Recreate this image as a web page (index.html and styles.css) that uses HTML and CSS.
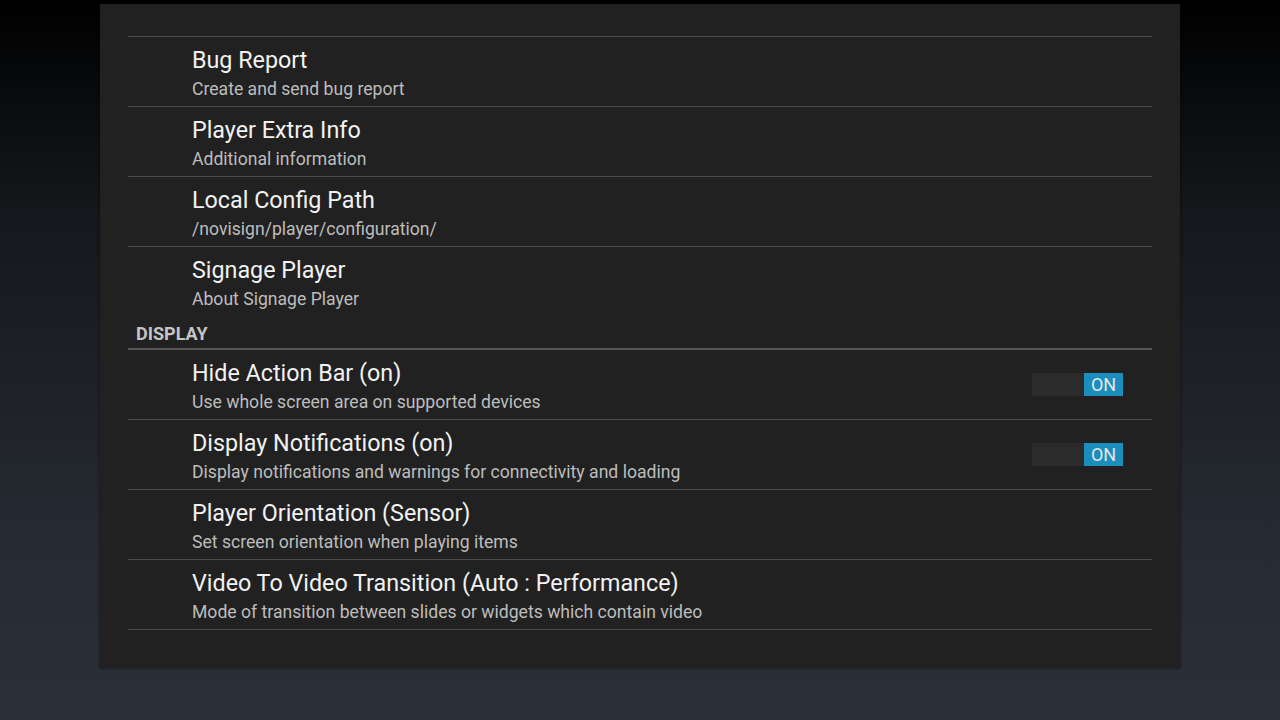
FILE: index.html
```html
<!DOCTYPE html>
<html lang="en">
<head>
  <meta charset="UTF-8" />
  <title>Settings</title>
  <link rel="stylesheet" href="styles.css">
</head>
<body>
  <div class="dialog">
    <div class="list">
      <div class="pref first">
        <div class="title">Bug Report</div>
        <div class="summary">Create and send bug report</div>
      </div>
      <div class="pref">
        <div class="title">Player Extra Info</div>
        <div class="summary">Additional information</div>
      </div>
      <div class="pref">
        <div class="title">Local Config Path</div>
        <div class="summary">/novisign/player/configuration/</div>
      </div>
      <div class="pref last">
        <div class="title">Signage Player</div>
        <div class="summary">About Signage Player</div>
      </div>

      <div class="category">DISPLAY</div>

      <div class="pref with-switch">
        <div class="text">
          <div class="title">Hide Action Bar (on)</div>
          <div class="summary">Use whole screen area on supported devices</div>
        </div>
        <div class="switch"><span class="off"></span><span class="on">ON</span></div>
      </div>
      <div class="pref with-switch">
        <div class="text">
          <div class="title">Display Notifications (on)</div>
          <div class="summary">Display notifications and warnings for connectivity and loading</div>
        </div>
        <div class="switch"><span class="off"></span><span class="on">ON</span></div>
      </div>
      <div class="pref">
        <div class="title">Player Orientation (Sensor)</div>
        <div class="summary">Set screen orientation when playing items</div>
      </div>
      <div class="pref">
        <div class="title">Video To Video Transition (Auto : Performance)</div>
        <div class="summary">Mode of transition between slides or widgets which contain video</div>
      </div>
    </div>
  </div>
</body>
</html>
```

FILE: styles.css
```css
* {
  margin: 0;
  padding: 0;
  box-sizing: border-box;
}

body {
  font-family: Roboto, "Liberation Sans", sans-serif;
  width: 1280px;
  height: 720px;
  overflow: hidden;
  background: linear-gradient(to bottom, #000 0%, #15181c 30%, #262a32 75%, #2b2f37 100%);
  padding-top: 4px;
}

.dialog {
  width: 1080px;
  height: 664px;
  margin-left: 100px;
  background-color: #212121;
  box-shadow: 0 0 3px rgba(0, 0, 0, 0.6);
  padding: 32px 28px 0 28px;
}

.list {
  display: flex;
  flex-direction: column;
}

.pref {
  height: 70px;
  border-bottom: 1px solid #4a4a4a;
  padding: 9px 0 0 64px;
  display: flex;
  flex-direction: column;
}

.pref.first {
  height: 71px;
  border-top: 1px solid #4a4a4a;
}

.pref.last {
  border-bottom: none;
}

.pref.with-switch {
  flex-direction: row;
  align-items: flex-start;
  justify-content: space-between;
  padding-right: 29px;
}

.text {
  display: flex;
  flex-direction: column;
}

.title {
  font-size: 23.3px;
  color: #f2f2f2;
  line-height: 28px;
}

.summary {
  font-size: 17.6px;
  color: #bdbdbd;
  line-height: 22px;
  margin-top: 4px;
}

.category {
  height: 33px;
  border-bottom: 2px solid #555;
  padding-left: 8px;
  font-size: 18px;
  font-weight: bold;
  color: #c4c4c4;
  line-height: 33px;
}

.switch {
  display: flex;
  height: 23px;
  margin-top: 14px;
}

.switch .off {
  width: 52px;
  background-color: #2b2b2b;
}

.switch .on {
  width: 39px;
  background-color: #1b8ebd;
  color: #e6e6e6;
  font-size: 18px;
  line-height: 24px;
  text-align: center;
}
```
